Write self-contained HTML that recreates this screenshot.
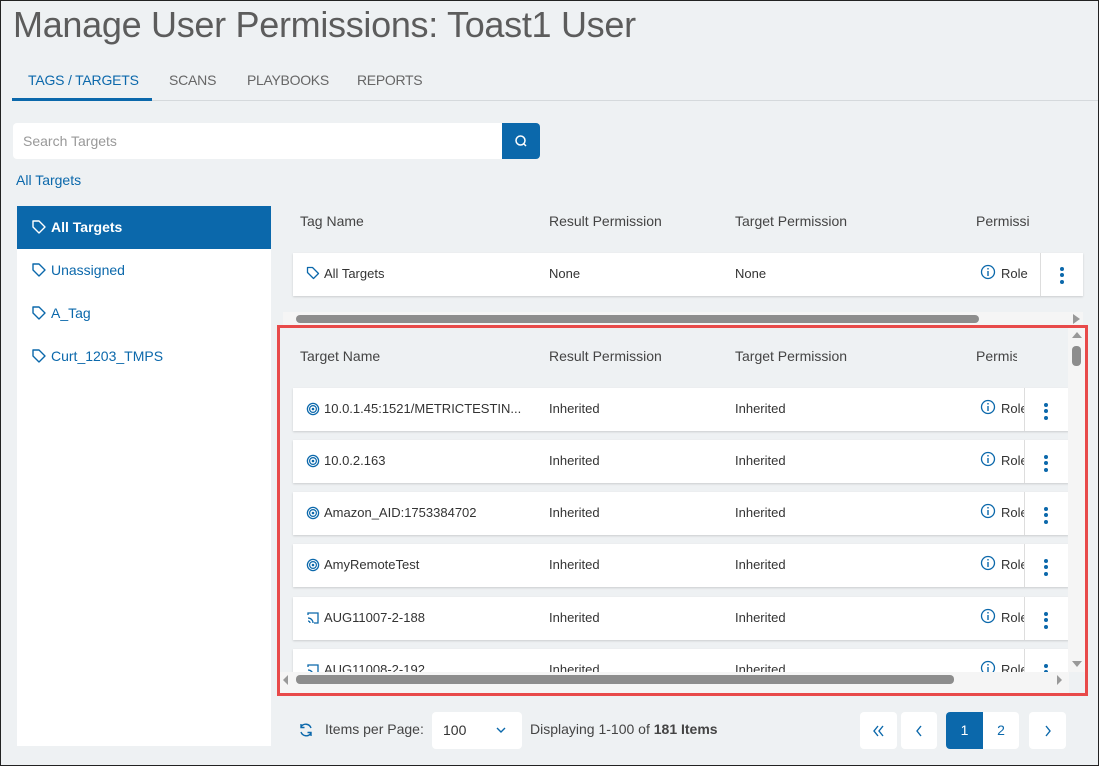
<!DOCTYPE html>
<html><head><style>
*{margin:0;padding:0;box-sizing:border-box}
body{width:1099px;height:766px;overflow:hidden;background:#eef1f3;font-family:"Liberation Sans",sans-serif;position:relative;color:#333}
.frame{position:absolute;left:0;top:0;width:1099px;height:766px;border:1px solid #222;pointer-events:none;z-index:10}
.a{position:absolute}
.blue{color:#0b68ab}
.row{position:absolute;background:#fff;height:43px;box-shadow:0 1px 2px rgba(0,0,0,.15);font-size:13px}
.row span{position:absolute;top:13px;white-space:nowrap}
.dots{position:absolute;top:0;height:43px;border-left:1px solid #ddd;background:#fff}
.dots i{position:absolute;left:19px;width:4px;height:4px;border-radius:2px;background:#0b68ab}
.hd{position:absolute;font-size:14px;color:#444}
.side{position:absolute;left:17px;width:254px;height:43px;font-size:14px;color:#0b68ab}
.side span{position:absolute;left:34px;top:13px}
.side svg{position:absolute;left:14px;top:13px}
.btn{position:absolute;top:712px;height:37px;background:#fff;border-radius:4px;color:#0b68ab;font-size:14px;text-align:center;line-height:37px}
.btn svg{position:absolute;left:50%;top:50%;transform:translate(-50%,-50%)}
</style></head><body>
<div class="frame"></div>
<div class="a" style="left:13px;top:4px;font-size:36px;color:#5c5c5c;letter-spacing:-0.3px">Manage User Permissions: Toast1 User</div>
<div class="a" style="left:12px;top:100px;width:1087px;height:1px;background:#d5d9dc"></div>
<div class="a blue" style="left:28px;top:72px;font-size:14px;letter-spacing:-0.2px">TAGS / TARGETS</div>
<div class="a" style="left:12px;top:98px;width:140px;height:3px;background:#0b68ab"></div>
<div class="a" style="left:169px;top:72px;font-size:14px;color:#666;letter-spacing:-0.2px">SCANS</div>
<div class="a" style="left:247px;top:72px;font-size:14px;color:#666;letter-spacing:-0.3px">PLAYBOOKS</div>
<div class="a" style="left:357px;top:72px;font-size:14px;color:#666;letter-spacing:-0.3px">REPORTS</div>
<div class="a" style="left:13px;top:123px;width:490px;height:36px;background:#fff;border-radius:4px 0 0 4px"></div>
<div class="a" style="left:23px;top:133px;font-size:14px;color:#999">Search Targets</div>
<div class="a" style="left:502px;top:123px;width:38px;height:36px;background:#0b68ab;border-radius:0 4px 4px 0">
<svg width="38" height="36"><circle cx="18.5" cy="17.5" r="4.5" fill="none" stroke="#fff" stroke-width="1.5"/><line x1="21.5" y1="20.5" x2="24" y2="23" stroke="#fff" stroke-width="1.5"/></svg></div>
<div class="a blue" style="left:16px;top:172px;font-size:14px">All Targets</div>
<div class="a" style="left:17px;top:206px;width:254px;height:540px;background:#fff"></div>
<div class="side" style="top:206px;background:#0b68ab;color:#fff;font-weight:bold"><svg width="16" height="16"><path d="M2 2h6l6 6-6 6-6-6z" fill="none" stroke="#fff" stroke-width="1.4" stroke-linejoin="round"/></svg><span>All Targets</span></div>
<div class="side" style="top:249px"><svg width="16" height="16"><path d="M2 2h6l6 6-6 6-6-6z" fill="none" stroke="#0b68ab" stroke-width="1.4" stroke-linejoin="round"/></svg><span>Unassigned</span></div>
<div class="side" style="top:292px"><svg width="16" height="16"><path d="M2 2h6l6 6-6 6-6-6z" fill="none" stroke="#0b68ab" stroke-width="1.4" stroke-linejoin="round"/></svg><span>A_Tag</span></div>
<div class="side" style="top:335px"><svg width="16" height="16"><path d="M2 2h6l6 6-6 6-6-6z" fill="none" stroke="#0b68ab" stroke-width="1.4" stroke-linejoin="round"/></svg><span>Curt_1203_TMPS</span></div>

<div class="hd" style="left:300px;top:213px">Tag Name</div>
<div class="hd" style="left:549px;top:213px">Result Permission</div>
<div class="hd" style="left:735px;top:213px">Target Permission</div>
<div class="hd" style="left:976px;top:213px">Permissi</div>
<div class="row" style="left:293px;top:253px;width:790px">
<svg class="a" style="left:13px;top:13px" width="14" height="14"><path d="M1.5 1.5h5l6 6-5 5-6-6z" fill="none" stroke="#0b68ab" stroke-width="1.3" stroke-linejoin="round"/></svg>
<span style="left:31px">All Targets</span><span style="left:256px">None</span><span style="left:442px">None</span>
<svg class="a" style="left:687px;top:11px" width="16" height="16"><circle cx="8" cy="8" r="6.5" fill="none" stroke="#0b68ab" stroke-width="1.3"/><rect x="7.3" y="7" width="1.4" height="5" fill="#0b68ab"/><rect x="7.3" y="4" width="1.4" height="1.5" fill="#0b68ab"/></svg>
<span style="left:708px">Role</span>
<div class="dots" style="left:747px;width:43px"><i style="top:14px"></i><i style="top:20px"></i><i style="top:27px"></i></div>
</div>
<div class="a" style="left:283px;top:312px;width:800px;height:13px;background:#f5f5f5"></div>
<div class="a" style="left:296px;top:315px;width:683px;height:8px;border-radius:4px;background:#8d8d8d"></div>
<div class="a" style="left:1073px;top:314px;border-left:7px solid #999;border-top:5px solid transparent;border-bottom:5px solid transparent"></div>

<div class="a" style="left:277px;top:325px;width:811px;height:371px;border:3px solid #e84a4a"></div>
<div class="a" style="left:280px;top:328px;width:789px;height:365px;overflow:hidden">
<div class="hd" style="left:20px;top:20px">Target Name</div>
<div class="hd" style="left:269px;top:20px">Result Permission</div>
<div class="hd" style="left:455px;top:20px">Target Permission</div>
<div class="hd" style="left:696px;top:20px;width:41px;overflow:hidden">Permissi</div>
</div>
<div class="a" style="left:280px;top:328px;width:789px;height:344px;overflow:hidden" id="rows">
</div>
<div class="a" style="left:1068px;top:328px;width:17px;height:344px;background:#f5f5f5"></div>
<div class="a" style="left:1072px;top:346px;width:9px;height:20px;border-radius:4px;background:#8d8d8d"></div>
<div class="a" style="left:1072px;top:332px;border-bottom:6px solid #999;border-left:5px solid transparent;border-right:5px solid transparent"></div>
<div class="a" style="left:1072px;top:661px;border-top:6px solid #999;border-left:5px solid transparent;border-right:5px solid transparent"></div>
<div class="a" style="left:280px;top:672px;width:789px;height:21px;background:#f5f5f5"></div>
<div class="a" style="left:296px;top:675px;width:658px;height:9px;border-radius:4px;background:#8d8d8d"></div>
<div class="a" style="left:283px;top:675px;border-right:5px solid #999;border-top:5px solid transparent;border-bottom:5px solid transparent"></div>
<div class="a" style="left:1057px;top:675px;border-left:5px solid #999;border-top:5px solid transparent;border-bottom:5px solid transparent"></div>

<svg class="a" style="left:298px;top:722px" width="16" height="16"><path d="M13 6A5.5 5.5 0 0 0 3 5M3 10a5.5 5.5 0 0 0 10 1" fill="none" stroke="#0b68ab" stroke-width="1.4"/><path d="M3 2v3.5h3.5M13 14v-3.5H9.5" fill="none" stroke="#0b68ab" stroke-width="1.4"/></svg>
<div class="a" style="left:325px;top:721px;font-size:14px;color:#444">Items per Page:</div>
<div class="a" style="left:432px;top:712px;width:90px;height:37px;background:#fff;border-radius:4px"></div>
<div class="a" style="left:443px;top:722px;font-size:14px">100</div>
<svg class="a" style="left:495px;top:725px" width="12" height="10"><path d="M2 3l4 4 4-4" fill="none" stroke="#0b68ab" stroke-width="1.4"/></svg>
<div class="a" style="left:530px;top:721px;font-size:14px;color:#444">Displaying 1-100 of <b>181 Items</b></div>
<div class="btn" style="left:860px;width:37px"><svg width="14" height="12"><path d="M6 1L2 6l4 5M11 1L7 6l4 5" fill="none" stroke="#0b68ab" stroke-width="1.4"/></svg></div>
<div class="btn" style="left:901px;width:36px"><svg width="8" height="12"><path d="M6 1L2 6l4 5" fill="none" stroke="#0b68ab" stroke-width="1.4"/></svg></div>
<div class="btn" style="left:946px;width:73px"></div>
<div class="btn" style="left:946px;width:37px;background:#0b68ab;color:#fff;border-radius:4px 0 0 4px">1</div>
<div class="btn" style="left:983px;width:36px;background:transparent">2</div>
<div class="btn" style="left:1029px;width:37px"><svg width="8" height="12"><path d="M2 1l4 5-4 5" fill="none" stroke="#0b68ab" stroke-width="1.4"/></svg></div>

<script>
var d=[["10.0.1.45:1521/METRICTESTIN...",0],["10.0.2.163",0],["Amazon_AID:1753384702",0],["AmyRemoteTest",0],["AUG11007-2-188",1],["AUG11008-2-192",1]];
var tops=[60,112,164,216,269,321],h="";
d.forEach(function(r,i){
var ic=r[1]?'<svg class="a" style="left:13px;top:14px" width="14" height="14"><path d="M2 4V2h10v10h-4M2 7a5 5 0 0 1 5 5M2 10a2 2 0 0 1 2 2" fill="none" stroke="#0b68ab" stroke-width="1.3"/></svg>':'<svg class="a" style="left:13px;top:14px" width="14" height="14"><circle cx="7" cy="7" r="5.6" fill="none" stroke="#0b68ab" stroke-width="1.3"/><circle cx="7" cy="7" r="3.4" fill="none" stroke="#0b68ab" stroke-width="1.2"/><circle cx="7" cy="7" r="1.3" fill="#0b68ab"/></svg>';
h+='<div class="row" style="left:13px;top:'+tops[i]+'px;width:776px">'+ic+'<span style="left:31px">'+r[0]+'</span><span style="left:256px">Inherited</span><span style="left:442px">Inherited</span><svg class="a" style="left:687px;top:11px" width="16" height="16"><circle cx="8" cy="8" r="6.5" fill="none" stroke="#0b68ab" stroke-width="1.3"/><rect x="7.3" y="7" width="1.4" height="5" fill="#0b68ab"/><rect x="7.3" y="4" width="1.4" height="1.5" fill="#0b68ab"/></svg><span style="left:708px">Role</span><div class="dots" style="left:731px;width:45px"><i style="top:15px"></i><i style="top:21px"></i><i style="top:28px"></i></div></div>';
});
document.getElementById("rows").innerHTML=h;
</script>
</body></html>
